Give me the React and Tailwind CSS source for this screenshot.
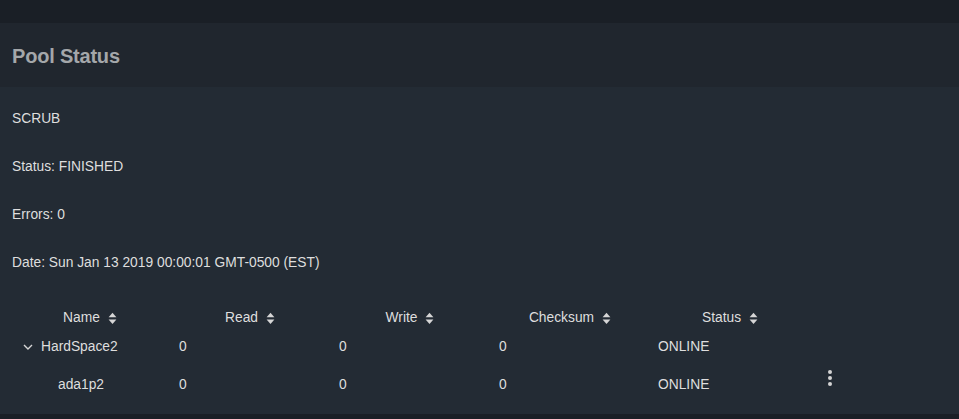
import React from 'react';

function SortIcon() {
  return (
    <svg width="9" height="13" viewBox="0 0 9 13" className="text-[#d6d6d6]">
      <path d="M4.5 0.8 L8.4 5.3 H0.6 Z" fill="currentColor" />
      <path d="M0.6 7.4 H8.4 L4.5 11.9 Z" fill="currentColor" />
    </svg>
  );
}

function Chevron() {
  return (
    <svg width="10" height="6" viewBox="0 0 10 6" className="text-[#d6d6d6]">
      <path d="M1 1 L5 5 L9 1" fill="none" stroke="currentColor" strokeWidth="1.4" />
    </svg>
  );
}

function Kebab() {
  return (
    <div className="flex flex-col items-center gap-[2px]">
      <span className="w-[4px] h-[4px] rounded-full bg-[#d4d4d4]" />
      <span className="w-[4px] h-[4px] rounded-full bg-[#d4d4d4]" />
      <span className="w-[4px] h-[4px] rounded-full bg-[#d4d4d4]" />
    </div>
  );
}

const headers = ['Name', 'Read', 'Write', 'Checksum', 'Status'];

const rows = [
  { name: 'HardSpace2', read: '0', write: '0', checksum: '0', status: 'ONLINE', parent: true },
  { name: 'ada1p2', read: '0', write: '0', checksum: '0', status: 'ONLINE' },
];

export default function App() {
  return (
    <div
      className="w-[959px] h-[419px] overflow-hidden bg-[#1a1f26] text-[13.8px] text-[#dedede]"
      style={{ fontFamily: '"Liberation Sans", Arial, sans-serif' }}
    >
      <div className="h-[23px] bg-[#1a1f26]" />
      <div className="h-[64px] bg-[#20262e] flex items-center px-3">
        <h2 className="text-[20px] font-bold text-[#a4a7aa] tracking-[-0.2px] pt-[1px]">Pool Status</h2>
      </div>
      <div className="h-[327px] bg-[#232b34] pt-[8px]">
        <div className="px-3">
          <div className="h-[48px] flex items-center">SCRUB</div>
          <div className="h-[48px] flex items-center">Status: FINISHED</div>
          <div className="h-[48px] flex items-center">Errors: 0</div>
          <div className="h-[48px] flex items-center">Date: Sun Jan 13 2019 00:00:01 GMT-0500 (EST)</div>
        </div>

        <div className="mt-[16px] px-[10px]">
          <div className="grid grid-cols-[160px_160px_160px_160px_160px_40px] h-[30px]">
            {headers.map((h) => (
              <div key={h} className="flex items-center justify-center gap-[8px]">
                <span>{h}</span>
                <SortIcon />
              </div>
            ))}
            <div />
          </div>

          {rows.map((r, i) => (
            <div
              key={r.name}
              className={`grid grid-cols-[160px_160px_160px_160px_160px_40px] ${i === 0 ? 'h-[28px]' : 'h-[48px]'}`}
            >
              <div className={`flex items-center ${r.parent ? 'pl-[13px] gap-[8px]' : 'pl-[48px]'}`}>
                {r.parent && <Chevron />}
                <span>{r.name}</span>
              </div>
              <div className="flex items-center pl-[9px]">{r.read}</div>
              <div className="flex items-center pl-[9px]">{r.write}</div>
              <div className="flex items-center pl-[9px]">{r.checksum}</div>
              <div className="flex items-center pl-[8px]">{r.status}</div>
              <div className="flex justify-center pt-[9px]">{!r.parent && <Kebab />}</div>
            </div>
          ))}
        </div>
      </div>
    </div>
  );
}
